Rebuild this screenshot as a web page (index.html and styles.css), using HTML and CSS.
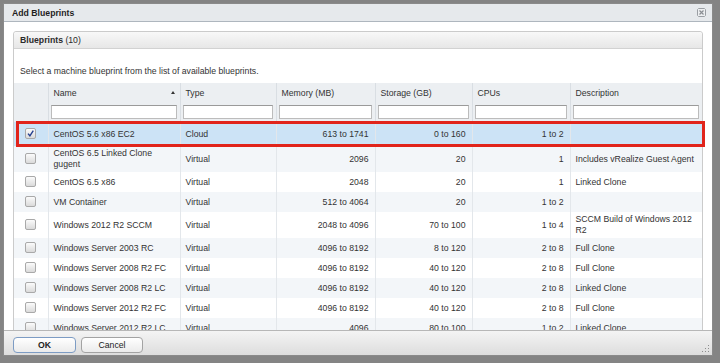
FILE: index.html
```html
<!DOCTYPE html>
<html>
<head>
<meta charset="utf-8">
<title>Add Blueprints</title>
<link rel="stylesheet" href="styles.css">
</head>
<body>
<div class="dialog">
  <div class="titlebar">
    <span class="title">Add Blueprints</span>
    <svg class="close" width="9" height="9" viewBox="0 0 9 9">
      <path d="M1.5 0.5h6l1 1v6l-1 1h-6l-1-1v-6z" fill="#eceef0" stroke="#9a9ea3" stroke-width="1"/>
      <path d="M2.5 2.5l4 4M6.5 2.5l-4 4" stroke="#8a8e93" stroke-width="1.2"/>
    </svg>
  </div>
  <div class="content">
    <div class="panel">
      <div class="panel-head"><b>Blueprints</b> (10)</div>
      <div class="panel-body">
        <p class="hint">Select a machine blueprint from the list of available blueprints.</p>
        <table class="grid">
          <colgroup>
            <col class="c-check"><col class="c-name"><col class="c-type"><col class="c-mem"><col class="c-sto"><col class="c-cpu"><col class="c-desc">
          </colgroup>
          <thead>
            <tr class="head-row">
              <th></th>
              <th>Name<span class="sort"></span></th>
              <th>Type</th>
              <th>Memory (MB)</th>
              <th>Storage (GB)</th>
              <th>CPUs</th>
              <th>Description</th>
            </tr>
            <tr class="filter-row">
              <th></th>
              <th><input class="filter" type="text"></th>
              <th><input class="filter" type="text"></th>
              <th><input class="filter" type="text"></th>
              <th><input class="filter" type="text"></th>
              <th><input class="filter" type="text"></th>
              <th><input class="filter" type="text"></th>
            </tr>
          </thead>
          <tbody>
            <tr class="selected">
              <td class="chk"><span class="cb on"><svg width="9" height="9" viewBox="0 0 9 9"><path d="M2 4.6l1.9 2.2L7.3 1.6" fill="none" stroke="#243f8f" stroke-width="1.4"/></svg></span></td>
              <td>CentOS 5.6 x86 EC2</td><td>Cloud</td><td class="num">613 to 1741</td><td class="num">0 to 160</td><td class="num">1 to 2</td><td></td>
            </tr>
            <tr class="alt tall">
              <td class="chk"><span class="cb"></span></td>
              <td>CentOS 6.5 Linked Clone gugent</td><td>Virtual</td><td class="num">2096</td><td class="num">20</td><td class="num">1</td><td>Includes vRealize Guest Agent</td>
            </tr>
            <tr>
              <td class="chk"><span class="cb"></span></td>
              <td>CentOS 6.5 x86</td><td>Virtual</td><td class="num">2048</td><td class="num">20</td><td class="num">1</td><td>Linked Clone</td>
            </tr>
            <tr class="alt">
              <td class="chk"><span class="cb"></span></td>
              <td>VM Container</td><td>Virtual</td><td class="num">512 to 4064</td><td class="num">20</td><td class="num">1 to 2</td><td></td>
            </tr>
            <tr class="tall">
              <td class="chk"><span class="cb"></span></td>
              <td>Windows 2012 R2 SCCM</td><td>Virtual</td><td class="num">2048 to 4096</td><td class="num">70 to 100</td><td class="num">1 to 4</td><td>SCCM Build of Windows 2012 R2</td>
            </tr>
            <tr class="alt">
              <td class="chk"><span class="cb"></span></td>
              <td>Windows Server 2003 RC</td><td>Virtual</td><td class="num">4096 to 8192</td><td class="num">8 to 120</td><td class="num">2 to 8</td><td>Full Clone</td>
            </tr>
            <tr>
              <td class="chk"><span class="cb"></span></td>
              <td>Windows Server 2008 R2 FC</td><td>Virtual</td><td class="num">4096 to 8192</td><td class="num">40 to 120</td><td class="num">2 to 8</td><td>Full Clone</td>
            </tr>
            <tr class="alt">
              <td class="chk"><span class="cb"></span></td>
              <td>Windows Server 2008 R2 LC</td><td>Virtual</td><td class="num">4096 to 8192</td><td class="num">40 to 120</td><td class="num">2 to 8</td><td>Linked Clone</td>
            </tr>
            <tr>
              <td class="chk"><span class="cb"></span></td>
              <td>Windows Server 2012 R2 FC</td><td>Virtual</td><td class="num">4096 to 8192</td><td class="num">40 to 120</td><td class="num">2 to 8</td><td>Full Clone</td>
            </tr>
            <tr class="alt">
              <td class="chk"><span class="cb"></span></td>
              <td>Windows Server 2012 R2 LC</td><td>Virtual</td><td class="num">4096</td><td class="num">80 to 100</td><td class="num">1 to 2</td><td>Linked Clone</td>
            </tr>
          </tbody>
        </table>
      </div>
    </div>
  </div>
  <div class="footer">
    <button class="btn primary" type="button">OK</button>
    <button class="btn" type="button">Cancel</button>
    <svg class="grip" width="8" height="8" viewBox="0 0 8 8">
      <rect x="6" y="0" width="1" height="1" fill="#8d8d8d"/>
      <rect x="3" y="3" width="1" height="1" fill="#8d8d8d"/>
      <rect x="6" y="3" width="1" height="1" fill="#8d8d8d"/>
      <rect x="0" y="6" width="1" height="1" fill="#8d8d8d"/>
      <rect x="3" y="6" width="1" height="1" fill="#8d8d8d"/>
      <rect x="6" y="6" width="1" height="1" fill="#8d8d8d"/>
    </svg>
  </div>
  <div class="callout"></div>
</div>
</body>
</html>
```

FILE: styles.css
```css
html, body {
  margin: 0;
  padding: 0;
}

body {
  background: #848484;
  padding: 3px 0 0 3px;
  font-family: "Liberation Sans", Arial, sans-serif;
  font-size: 8.7px;
  color: #333;
}

.dialog {
  position: relative;
  box-sizing: border-box;
  width: 710px;
  height: 353px;
  border: 1px solid #8a8a8a;
  background: #fff;
  display: flex;
  flex-direction: column;
}

.titlebar {
  height: 17px;
  flex: none;
  background: #e6e9ec;
  border-bottom: 1px solid #aeb6be;
  display: flex;
  align-items: center;
  justify-content: space-between;
  padding: 0 6px 0 8px;
}

.title {
  font-weight: bold;
  color: #1e1e1e;
}

.close {
  display: block;
}

.content {
  flex: 1;
  min-height: 0;
  overflow: hidden;
  padding: 9px 9px 0 9px;
}

.panel {
  border: 1px solid #cbcbcb;
  border-radius: 3px 3px 0 0;
  background: #fff;
}

.panel-head {
  height: 16px;
  line-height: 16px;
  padding-left: 6px;
  border-bottom: 1px solid #d2d2d2;
  background: linear-gradient(#f8f8f8, #e7e7e7);
  border-radius: 3px 3px 0 0;
  color: #2a2a2a;
}

.panel-body {
  padding-top: 15px;
}

.hint {
  margin: 0 0 5px 0;
  padding-left: 6px;
  line-height: 14px;
}

.grid {
  width: 688px;
  table-layout: fixed;
  border-collapse: collapse;
  border-spacing: 0;
}

.c-check { width: 34px; }
.c-name { width: 132px; }
.c-type { width: 96px; }
.c-mem { width: 99px; }
.c-sto { width: 97px; }
.c-cpu { width: 98px; }
.c-desc { width: 132px; }

.grid th {
  background: #eceff2;
  font-weight: normal;
  text-align: left;
  color: #333;
  border-left: 1px solid #d9dee3;
}

.grid th:first-child,
.grid td:first-child {
  border-left: none;
}

.head-row {
  height: 20px;
}

.head-row th {
  padding: 0 5px;
  line-height: 11px;
}

.sort {
  float: right;
  margin-top: 3px;
  width: 0;
  height: 0;
  border-left: 2.5px solid transparent;
  border-right: 2.5px solid transparent;
  border-bottom: 3px solid #333;
}

.filter-row {
  height: 19px;
}

.filter-row th {
  padding: 1px 3px 3px 2px;
}

.filter {
  display: block;
  box-sizing: border-box;
  width: 100%;
  height: 14px;
  margin: 0;
  padding: 0 2px;
  border: 1px solid #bcbcbc;
  border-top-color: #9a9a9a;
  border-radius: 0;
  background: #fff;
  font: inherit;
  outline: none;
}

.grid tbody tr {
  height: 20px;
}

.grid tbody tr.tall {
  height: 26px;
}

.grid tbody tr.selected {
  height: 24px;
  background: #cce3f6;
}

.grid tbody tr.alt {
  background: #f3f6f9;
}

.grid td {
  padding: 0 5px;
  line-height: 11px;
  vertical-align: middle;
  border-left: 1px solid #e3e7eb;
  overflow: hidden;
}

.grid td.num {
  text-align: right;
  padding-right: 6px;
}

.grid td.chk {
  padding: 0;
  text-align: center;
}

.cb {
  display: inline-block;
  box-sizing: border-box;
  width: 11px;
  height: 11px;
  vertical-align: middle;
  border: 1px solid #a9a9a9;
  border-radius: 2px;
  background: linear-gradient(#fbfbfb, #dadada);
  position: relative;
  top: -1px;
}

.cb svg {
  display: block;
  margin: 0;
}

.footer {
  position: relative;
  flex: none;
  height: 25px;
  box-sizing: border-box;
  border-top: 1px solid #b7b7b7;
  background: linear-gradient(#f4f4f4, #dddddd);
  padding: 6px 9px 0 9px;
  display: flex;
  align-items: flex-start;
  gap: 5px;
}

.btn {
  box-sizing: border-box;
  height: 16px;
  width: 62px;
  margin: 0;
  padding: 0;
  border: 1px solid #a3a3a3;
  border-radius: 4px;
  background: linear-gradient(#ffffff, #ebebeb);
  font: inherit;
  color: #222;
  line-height: 14px;
}

.btn.primary {
  width: 63px;
  font-weight: bold;
  border-color: #7d9cc4;
}

.grip {
  position: absolute;
  right: 2px;
  bottom: 2px;
}

.callout {
  position: absolute;
  left: 12px;
  top: 117px;
  width: 689px;
  height: 26px;
  box-sizing: border-box;
  border: 3px solid #e1241b;
  pointer-events: none;
}
```
